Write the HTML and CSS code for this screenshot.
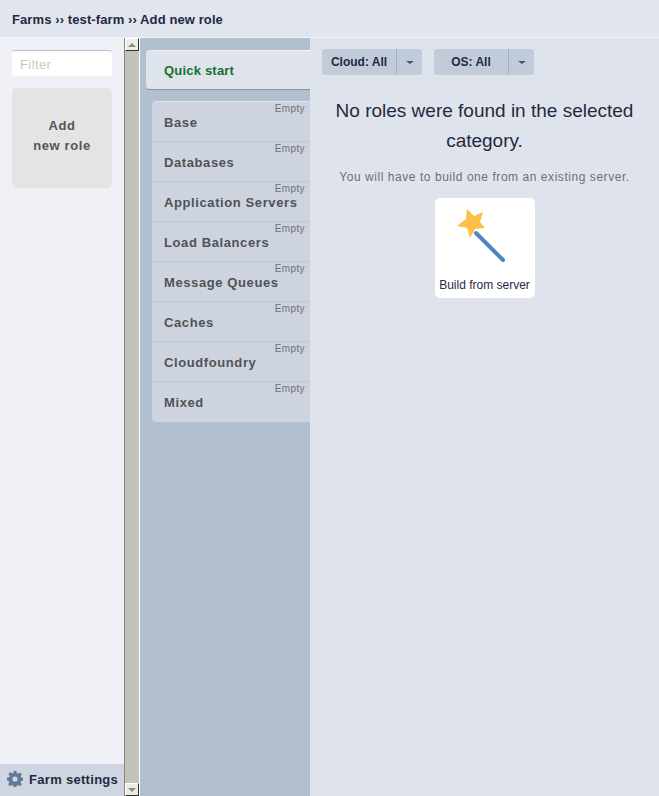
FILE: index.html
```html
<!DOCTYPE html>
<html lang="en">
    <head>
        <meta charset="UTF-8">
        <title>Add new role</title>
        <link rel="stylesheet" href="styles.css">
    </head>
    <body>
        <div class="page-header">Farms ›› test-farm ›› Add new role</div>
        <div class="page-body">
            <div class="sidebar">
                <div class="sidebar-top">
                    <input class="filter" type="text" placeholder="Filter">
                    <div class="add-role">Add<br>new role</div>
                </div>
                <div class="farm-settings">
                    <svg class="gear" width="16" height="16" viewBox="0 0 16 16">
                        <path fill="#5f7a99" fill-rule="evenodd" d="M6.6 0h2.8l.4 2.2 1.2.5L12.9 1.4l2 2-1.3 1.9.5 1.2 2.2.4v2.8l-2.2.4-.5 1.2 1.3 1.9-2 2-1.9-1.3-1.2.5-.4 2.2H6.600l-.4-2.2-1.200-.5-1.900 1.300-2-2 1.300-1.900-.5-1.200L0 9.400V6.600l2.200-.4.5-1.200L1.400 3.100l2-2 1.900 1.300 1.200-.5zM8 5.400a2.600 2.600 0 1 0 0 5.200 2.600 2.600 0 0 0 0-5.200z"/>
                    </svg>
                    Farm settings
                </div>
            </div>
            <div class="scrollbar">
                <div class="scroll-btn"><span class="arrow-up"></span></div>
                <div class="scroll-btn"><span class="arrow-down"></span></div>
            </div>
            <div class="categories">
                <div class="quick-start">Quick start</div>
                <div class="cat-list">
                    <div class="cat"><span class="cat-empty">Empty</span>Base</div>
                    <div class="cat"><span class="cat-empty">Empty</span>Databases</div>
                    <div class="cat"><span class="cat-empty">Empty</span>Application Servers</div>
                    <div class="cat"><span class="cat-empty">Empty</span>Load Balancers</div>
                    <div class="cat"><span class="cat-empty">Empty</span>Message Queues</div>
                    <div class="cat"><span class="cat-empty">Empty</span>Caches</div>
                    <div class="cat"><span class="cat-empty">Empty</span>Cloudfoundry</div>
                    <div class="cat"><span class="cat-empty">Empty</span>Mixed</div>
                </div>
            </div>
            <div class="main">
                <div class="toolbar">
                    <div class="split-btn">
                        <div class="split-label split-cloud">Cloud: All</div>
                        <div class="split-arrow"><span class="caret"></span></div>
                    </div>
                    <div class="split-btn">
                        <div class="split-label split-os">OS: All</div>
                        <div class="split-arrow"><span class="caret"></span></div>
                    </div>
                </div>
                <div class="no-roles">No roles were found in the selected category.</div>
                <div class="hint">You will have to build one from an existing server.</div>
                <div class="build-card">
                    <svg class="wand" width="56" height="56" viewBox="0 0 56 56">
                        <line x1="22" y1="25" x2="49" y2="52" stroke="#4f86c0" stroke-width="4" stroke-linecap="round"/>
                        <polygon fill="#fdc045" points="13,1 20,8 29,4 26,14 31,20 21,21 16,30 13,20 3,18 12,11"/>
                    </svg>
                    <div class="build-label">Build from server</div>
                </div>
            </div>
        </div>
    </body>
</html>
```

FILE: styles.css
```css
html, body {
    height: 100%;
}
body {
    margin: 0;
    display: flex;
    flex-direction: column;
    overflow: hidden;
    font-family: "Liberation Sans", Arial, sans-serif;
    color: #1f2a40;
    background-color: #dfe4ec;
}

.page-header {
    height: 37px;
    line-height: 40px;
    padding-left: 12px;
    font-size: 13px;
    font-weight: bold;
    letter-spacing: 0.1px;
    background-color: #e1e5ee;
    border-bottom: 1px solid #f1f3f7;
    flex: none;
}
.page-body {
    display: flex;
    flex: 1;
    min-height: 0;
}

.sidebar {
    width: 124px;
    flex: none;
    display: flex;
    flex-direction: column;
    background-color: #eff1f6;
}
.sidebar-top {
    flex: 1;
    padding: 12px 12px 0;
}
.filter {
    display: block;
    box-sizing: border-box;
    width: 100px;
    height: 26px;
    padding: 2px 8px 0;
    border: 0;
    border-top: 1px solid #b4c0d2;
    border-radius: 3px;
    outline: none;
    font-family: inherit;
    font-size: 13px;
    letter-spacing: 0.4px;
    background-color: #fff;
}
.filter::placeholder {
    color: #c8c8c8;
    opacity: 1;
}
.add-role {
    margin-top: 12px;
    height: 100px;
    box-sizing: border-box;
    padding-top: 28px;
    border-radius: 5px;
    background-color: #e4e4e4;
    color: #555;
    font-size: 13px;
    font-weight: bold;
    line-height: 20px;
    letter-spacing: 0.6px;
    text-align: center;
}
.farm-settings {
    height: 32px;
    display: flex;
    align-items: center;
    gap: 6px;
    padding-left: 7px;
    padding-bottom: 2px;
    box-sizing: border-box;
    background-color: #cfd6e2;
    font-size: 13px;
    font-weight: bold;
    letter-spacing: 0.3px;
}

.scrollbar {
    width: 14px;
    flex: none;
    display: flex;
    flex-direction: column;
    justify-content: space-between;
    background-color: #c3c2bb;
    border-left: 1px solid #87857d;
    border-right: 1px solid #fff;
}
.scroll-btn {
    height: 13px;
    display: flex;
    align-items: center;
    justify-content: center;
    background-color: #ecebe6;
    border: 1px solid #2e2e2c;
    border-top-color: #fff;
    border-left-color: #fff;
    box-sizing: border-box;
}
.arrow-up, .arrow-down {
    width: 0;
    height: 0;
    border-left: 4px solid transparent;
    border-right: 4px solid transparent;
}
.arrow-up {
    border-bottom: 4px solid #8a8a85;
}
.arrow-down {
    border-top: 4px solid #8a8a85;
}

.categories {
    width: 170px;
    flex: none;
    box-sizing: border-box;
    padding-top: 12px;
    background-color: #b2bfce;
    overflow: hidden;
}
.quick-start {
    height: 40px;
    margin-left: 6px;
    line-height: 39px;
    padding-left: 18px;
    border-radius: 4px 0 0 4px;
    border-top: 1px solid #f0f2f6;
    border-bottom: 1px solid #7f93a8;
    box-sizing: border-box;
    background-color: #dfe4ec;
    color: #14722e;
    font-size: 13px;
    font-weight: bold;
    letter-spacing: 0.2px;
}
.cat-list {
    margin: 11px 0 0 12px;
    border-radius: 4px 0 0 4px;
    border-top: 1px solid #dfe4ec;
    overflow: hidden;
}
.cat {
    position: relative;
    box-sizing: border-box;
    height: 40px;
    padding: 13px 0 0 12px;
    background-color: #ced4df;
    border-bottom: 1px solid #bfc8d6;
    color: #505256;
    font-size: 13px;
    font-weight: bold;
    letter-spacing: 0.6px;
    white-space: nowrap;
}
.cat:last-child {
    border-bottom: 0;
}
.cat-empty {
    position: absolute;
    top: 1px;
    right: 5px;
    color: #6e7076;
    font-size: 10px;
    font-weight: normal;
    letter-spacing: 0.4px;
}

.main {
    flex: 1;
    min-width: 0;
    display: flex;
    flex-direction: column;
    align-items: center;
    background-color: #dfe4ec;
}
.toolbar {
    align-self: flex-start;
    display: flex;
    gap: 12px;
    padding: 11px 0 0 12px;
}
.split-btn {
    display: flex;
    height: 26px;
    border-radius: 3px;
    background-color: #c1cbda;
    font-size: 12px;
    font-weight: bold;
    line-height: 26px;
}
.split-label {
    text-align: center;
    border-right: 1px solid #9fb0c4;
}
.split-cloud {
    width: 74px;
}
.split-os {
    width: 74px;
}
.split-arrow {
    width: 25px;
    display: flex;
    align-items: center;
    justify-content: center;
}
.caret {
    width: 0;
    height: 0;
    border-left: 4px solid transparent;
    border-right: 4px solid transparent;
    border-top: 3px solid #3f5573;
}
.no-roles {
    width: 320px;
    margin-top: 21px;
    font-size: 19px;
    line-height: 30px;
    text-align: center;
}
.hint {
    margin-top: 14px;
    color: #6b6f76;
    font-size: 12px;
    letter-spacing: 0.55px;
    text-align: center;
}
.build-card {
    width: 100px;
    height: 100px;
    margin-top: 14px;
    box-sizing: border-box;
    padding-top: 10px;
    border-radius: 5px;
    background-color: #fff;
    text-align: center;
}
.wand {
    display: block;
    margin-left: 19px;
}
.build-label {
    margin-top: 14px;
    font-size: 12px;
    line-height: 14px;
    white-space: nowrap;
}
```
